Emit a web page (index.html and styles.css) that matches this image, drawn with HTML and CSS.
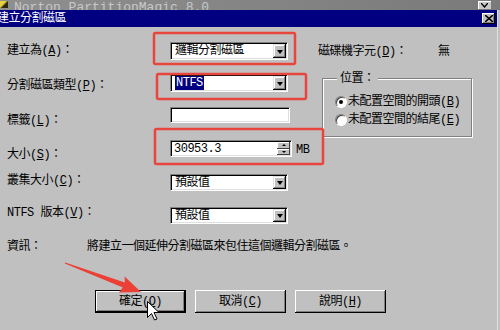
FILE: index.html
```html
<!DOCTYPE html>
<html>

<head>
    <title>建立分割磁區</title>
    <link rel="stylesheet" href="styles.css">
</head>

<body>
    <div class="screen">
        <div class="app-bar">
            <span class="app-icon"></span>
            <span class="app-name">Norton PartitionMagic 8.0</span>
            <span class="app-btn">
                <svg width="7" height="5" viewBox="0 0 7 5"><path d="M0 0 L3.5 4 L7 0" fill="none" stroke="#000" stroke-width="1.4"/></svg>
            </span>
        </div>

        <div class="dialog">
            <div class="title-bar">
                <span class="title">建立分割磁區</span>
                <span class="close-btn">
                    <svg width="8" height="7" viewBox="0 0 8 7"><path d="M0 0 L8 7 M8 0 L0 7" stroke="#000" stroke-width="1.6"/></svg>
                </span>
            </div>

            <div class="form">
                <!-- row 1 -->
                <div class="label">建立為(<u>A</u>)：</div>
                <div class="combo">
                    <span class="combo-text">邏輯分割磁區</span>
                    <span class="drop"></span>
                </div>
                <div class="drive">
                    <span class="drive-label">磁碟機字元(<u>D</u>)：</span>
                    <span>無</span>
                </div>

                <!-- row 2 -->
                <div class="label mid">分割磁區類型(<u>P</u>)：</div>
                <div class="combo">
                    <span class="combo-text"><span class="selected">NTFS</span></span>
                    <span class="drop"></span>
                </div>
                <div class="group">
                    <span class="group-title">位置：</span>
                    <div class="radio-row">
                        <span class="radio checked"></span>
                        <span>未配置空間的開頭(<u>B</u>)</span>
                    </div>
                    <div class="radio-row">
                        <span class="radio"></span>
                        <span>未配置空間的結尾(<u>E</u>)</span>
                    </div>
                </div>

                <!-- row 3 -->
                <div class="label low">標籤(<u>L</u>)：</div>
                <div class="field"></div>

                <!-- row 4 -->
                <div class="label low">大小(<u>S</u>)：</div>
                <div class="spin-wrap">
                    <div class="spin">
                        <span class="spin-text">30953.3</span>
                        <span class="spin-btns">
                            <span class="spin-up"></span>
                            <span class="spin-down"></span>
                        </span>
                    </div>
                    <span class="unit">MB</span>
                </div>

                <!-- row 5 -->
                <div class="label high">叢集大小(<u>C</u>)：</div>
                <div class="combo short">
                    <span class="combo-text">預設值</span>
                    <span class="drop"></span>
                </div>

                <!-- row 6 -->
                <div class="label high">NTFS 版本(<u>V</u>)：</div>
                <div class="combo short">
                    <span class="combo-text">預設值</span>
                    <span class="drop"></span>
                </div>
            </div>

            <div class="info">
                <span class="info-label">資訊：</span>
                <span class="info-text">將建立一個延伸分割磁區來包住這個邏輯分割磁區。</span>
            </div>

            <div class="buttons">
                <div class="btn default">確定(<u>O</u>)</div>
                <div class="btn">取消(<u>C</u>)</div>
                <div class="btn">說明(<u>H</u>)</div>
            </div>
        </div>

        <!-- annotations drawn over the screenshot -->
        <svg class="marks" width="500" height="330" viewBox="0 0 500 330">
            <rect class="mark-box" x="154" y="33" width="141" height="31" rx="1.5"/>
            <rect class="mark-box" x="157" y="74" width="149" height="25" rx="1.5"/>
            <rect class="mark-box" x="155" y="129" width="168" height="35" rx="1.5"/>
            <polygon class="mark-arrow" points="65.2,262.4 124.9,282.4 124.6,276.6 141,292 118.8,292.6 122.9,287.4 64.8,263.6"/>
            <path class="cursor" d="M147.5 301.5 L147.5 317.5 L151.5 313.5 L154.5 320 L157 319 L154 312.5 L159 312.5 Z"/>
        </svg>
    </div>
</body>

</html>
```

FILE: styles.css
```css
body {
    margin: 0;
    background-color: #c0c0c0;
    color: #000000;
    font-family: "Liberation Mono", "Noto Sans CJK TC", monospace;
    font-size: 12px;
    letter-spacing: -0.5px;
}

u {
    text-underline-offset: 1px;
}

.screen {
    position: relative;
    width: 500px;
    height: 330px;
    overflow: hidden;
}

/* main window behind the dialog */
.app-bar {
    display: flex;
    align-items: flex-start;
    height: 10px;
    background: linear-gradient(to right, #8f8f8f, #7a7a7a);
    overflow: hidden;
}

.app-icon {
    width: 8px;
    height: 7px;
    margin-top: 1px;
    background: linear-gradient(135deg, #e8d040 40%, #2a2a10 60%);
}

.app-name {
    display: block;
    height: 9px;
    margin-left: 6px;
    margin-top: 1px;
    overflow: hidden;
    color: #c8c8c8;
    font-size: 13px;
    line-height: 14px;
    letter-spacing: 0;
}

.app-btn {
    display: flex;
    justify-content: center;
    align-items: flex-end;
    width: 13px;
    height: 8px;
    margin: 1px 9px 0 auto;
    padding-bottom: 1px;
    box-sizing: border-box;
    background-color: #c8c8c8;
    box-shadow: inset 1px 1px #ffffff;
}

/* dialog */
.dialog {
    width: 497px;
    height: 320px;
    background-color: #c0c0c0;
    box-shadow: 1px 0 #e0e0e0;
}

.title-bar {
    display: flex;
    align-items: center;
    justify-content: space-between;
    height: 17px;
    background-color: #000080;
    color: #FFFFFF;
}

.title {
    margin-left: -3px;
    line-height: 14px;
}

.close-btn {
    display: flex;
    align-items: center;
    justify-content: center;
    width: 13px;
    height: 11px;
    margin-right: 2px;
    background-color: #c0c0c0;
    box-shadow: inset -1px -1px #000000, inset 1px 1px #ffffff, inset -2px -2px #808080;
}

.form {
    display: grid;
    grid-template-columns: 163px 130px 1fr;
    grid-template-rows: 32px 32px 32px 35px 33px 32px;
    padding: 8px 0 0 7px;
}

.label {
    grid-column: 1;
    align-self: center;
    line-height: 14px;
    white-space: nowrap;
}

.label.mid {
    padding-top: 6px;
}

.label.low {
    padding-top: 12px;
}

.label.high {
    padding-bottom: 4px;
}

/* sunken edit look shared by combo, field and spin */
.combo,
.field,
.spin {
    box-sizing: border-box;
    background-color: #FFFFFF;
    border: 1px solid;
    border-color: #808080 #ffffff #ffffff #808080;
    box-shadow: inset 1px 1px #000000, inset -1px -1px #dfdfdf;
}

.combo {
    grid-column: 2;
    display: flex;
    align-self: center;
    width: 118px;
    height: 18px;
    padding: 1px 1px 1px 2px;
}

.combo.short {
    height: 17px;
}

.combo-text {
    flex: 1;
    padding-left: 2px;
    line-height: 14px;
}

.selected {
    background-color: #000080;
    color: #FFFFFF;
    padding: 0 1px;
}

.drop {
    display: flex;
    align-items: center;
    justify-content: center;
    width: 13px;
    background-color: #c0c0c0;
    box-shadow: inset -1px -1px #000000, inset 1px 1px #dfdfdf, inset -2px -2px #808080, inset 2px 2px #ffffff;
}

.drop::after {
    content: "";
    border-top: 4px solid #000000;
    border-left: 3.5px solid transparent;
    border-right: 3.5px solid transparent;
    margin-top: 1px;
}

.drive {
    grid-column: 3;
    display: flex;
    align-self: center;
    padding: 2px 0 0 18px;
    line-height: 14px;
}

.drive-label {
    width: 120px;
}

/* position group box */
.group {
    grid-row: 2 / 4;
    grid-column: 3;
    align-self: start;
    width: 150px;
    margin: 11px 0 0 22px;
    padding: 0 0 7px 12px;
    box-sizing: border-box;
    border: 1px solid #808080;
    box-shadow: inset 1px 1px #ffffff, 1px 1px #ffffff;
    line-height: 14px;
}

.group-title {
    display: inline-block;
    margin: -7px 0 -2px 2px;
    padding: 0 3px;
    background-color: #c0c0c0;
    vertical-align: top;
}

.radio-row {
    display: flex;
    align-items: center;
    gap: 1px;
    height: 18px;
    white-space: nowrap;
}

.radio {
    display: flex;
    align-items: center;
    justify-content: center;
    width: 12px;
    height: 12px;
    box-sizing: border-box;
    border-radius: 50%;
    background-color: #FFFFFF;
    border: 1px solid;
    border-color: #808080 #ffffff #ffffff #808080;
    box-shadow: inset 1px 1px #404040;
}

.radio.checked::after {
    content: "";
    width: 4px;
    height: 4px;
    border-radius: 50%;
    background-color: #000000;
}

.field {
    grid-column: 2;
    align-self: center;
    width: 120px;
    height: 16px;
}

.spin-wrap {
    grid-column: 2 / 4;
    display: flex;
    align-items: center;
    gap: 4px;
    align-self: center;
}

.spin {
    display: flex;
    flex-shrink: 0;
    width: 122px;
    height: 17px;
    padding: 1px;
}

.spin-text {
    flex: 1;
    padding-left: 2px;
    line-height: 14px;
}

.spin-btns {
    display: flex;
    flex-direction: column;
    width: 13px;
}

.spin-up,
.spin-down {
    flex: 1;
    display: flex;
    align-items: center;
    justify-content: center;
    background-color: #c0c0c0;
    box-shadow: inset -1px -1px #404040, inset 1px 1px #ffffff;
}

.spin-up::after {
    content: "";
    border-bottom: 2px solid #000000;
    border-left: 2px solid transparent;
    border-right: 2px solid transparent;
}

.spin-down::after {
    content: "";
    border-top: 2px solid #000000;
    border-left: 2px solid transparent;
    border-right: 2px solid transparent;
}

.unit {
    line-height: 14px;
    padding-top: 2px;
}

.info {
    display: flex;
    margin-top: 9px;
    padding-left: 7px;
    line-height: 14px;
    white-space: nowrap;
}

.info-label {
    width: 80px;
}

.buttons {
    display: flex;
    gap: 9px;
    margin-top: 36px;
    padding-left: 95px;
}

.btn {
    display: flex;
    align-items: center;
    justify-content: center;
    width: 91px;
    height: 23px;
    box-sizing: border-box;
    line-height: 14px;
    background-color: #c0c0c0;
    box-shadow: inset -1px -1px #000000, inset 1px 1px #ffffff, inset -2px -2px #808080;
}

.btn.default {
    border: 1px solid #000000;
}

/* red annotations */
.marks {
    position: absolute;
    left: 0;
    top: 0;
    pointer-events: none;
}

.mark-box {
    fill: none;
    stroke: #e8453d;
    stroke-width: 2.5;
}

.mark-arrow {
    fill: #ec3f35;
}

.cursor {
    fill: #FFFFFF;
    stroke: #000000;
    stroke-width: 1;
    stroke-linejoin: round;
}
```
